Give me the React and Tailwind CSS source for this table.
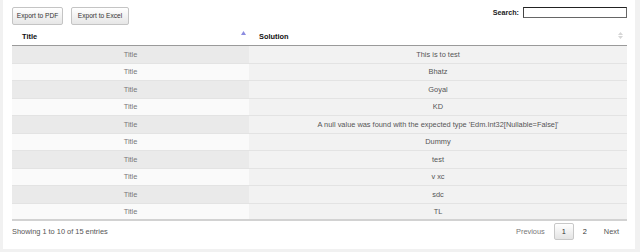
import React from "react";

const rows = [
  "This is to test",
  "Bhatz",
  "Goyal",
  "KD",
  "A null value was found with the expected type 'Edm.Int32[Nullable=False]'",
  "Dummy",
  "test",
  "v xc",
  "sdc",
  "TL",
];

export default function App() {
  return (
    <div
      className="w-[640px] h-[252px] bg-[#f1f1f1] overflow-hidden"
      style={{ fontFamily: '"Liberation Sans", Arial, sans-serif' }}
    >
      <div className="ml-[3px] w-[632px] h-[249px] bg-white pl-[9px] pr-[8px] pt-[7px]">
        {/* toolbar */}
        <div className="flex justify-between items-start h-[18px]">
          <div className="flex gap-[8px]">
            <button className="w-[51px] h-[18px] border border-[#c4c4c4] rounded-[2px] bg-gradient-to-b from-white to-[#e6e6e6] text-[6.6px] text-[#333] flex items-center justify-center">
              Export to PDF
            </button>
            <button className="w-[58px] h-[18px] border border-[#c4c4c4] rounded-[2px] bg-gradient-to-b from-white to-[#e6e6e6] text-[6.6px] text-[#333] flex items-center justify-center">
              Export to Excel
            </button>
          </div>
          <div className="flex items-center h-[11px] gap-[4px]">
            <span className="text-[7.2px] font-bold text-[#222] leading-none">Search:</span>
            <div className="w-[104px] h-[11px] border border-[#666] border-t-[#222] border-l-[#444] bg-white" />
          </div>
        </div>

        {/* header */}
        <div className="mt-[1px] h-[20px] flex border-b border-[#9a9a9a] text-[7.4px] font-bold text-[#111]">
          <div className="w-[237px] relative flex items-center pl-[10px] pt-[2px]">
            Title
            <svg
              className="absolute right-[3px] top-[5px]"
              width="5"
              height="4"
              viewBox="0 0 5 4"
            >
              <polygon points="2.5,0 5,4 0,4" fill="#8c8ce0" />
            </svg>
          </div>
          <div className="flex-1 relative flex items-center pl-[10px] pt-[2px]">
            Solution
            <svg
              className="absolute right-[4px] top-[6px]"
              width="5"
              height="7"
              viewBox="0 0 5 7"
            >
              <polygon points="2.5,0 5,3 0,3" fill="#d6d6d6" />
              <polygon points="0,4 5,4 2.5,7" fill="#d6d6d6" />
            </svg>
          </div>
        </div>

        {/* body */}
        <div>
          {rows.map((r, i) => (
            <div
              key={i}
              className={
                "h-[17.5px] flex text-[7.4px] " +
                (i === rows.length - 1
                  ? "border-b-2 border-[#d2d2d2]"
                  : "border-b border-[#e3e3e3]")
              }
            >
              <div
                className={
                  "w-[237px] flex items-center justify-center text-[#777] " +
                  (i % 2 === 0 ? "bg-[#eaeaea]" : "bg-[#fafafa]")
                }
              >
                Title
              </div>
              <div className="flex-1 flex items-center justify-center bg-[#f2f2f2] text-[#555]">
                {r}
              </div>
            </div>
          ))}
        </div>

        {/* footer */}
        <div className="mt-[2px] h-[17px] flex items-center justify-between text-[7.4px]">
          <span className="text-[#555]">Showing 1 to 10 of 15 entries</span>
          <div className="flex items-center gap-[1px] h-[17px]">
            <span className="px-[8px] text-[#777]">Previous</span>
            <span className="w-[20px] h-[17px] border border-[#c8c8c8] rounded-[2px] bg-gradient-to-b from-white to-[#e4e4e4] flex items-center justify-center text-[#333]">
              1
            </span>
            <span className="w-[20px] flex justify-center text-[#333]">2</span>
            <span className="px-[8px] text-[#555]">Next</span>
          </div>
        </div>
      </div>
    </div>
  );
}
